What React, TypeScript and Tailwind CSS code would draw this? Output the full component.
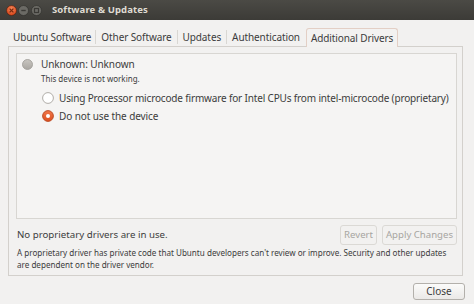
import React from "react";

function TitleButtons() {
  return (
    <div className="flex items-center gap-[1px] pl-[6px]">
      <svg width="11" height="11" viewBox="0 0 11 11">
        <defs>
          <radialGradient id="cl" cx="50%" cy="35%" r="60%">
            <stop offset="0%" stopColor="#f58a5c" />
            <stop offset="100%" stopColor="#d9481c" />
          </radialGradient>
        </defs>
        <circle cx="5.5" cy="5.5" r="5" fill="url(#cl)" stroke="#4a2010" strokeWidth="0.6" />
        <path d="M3.6 3.6 L7.4 7.4 M7.4 3.6 L3.6 7.4" stroke="#7a2a10" strokeWidth="1.3" />
      </svg>
      <svg width="11" height="11" viewBox="0 0 11 11">
        <circle cx="5.5" cy="5.5" r="5" fill="#6b6a65" stroke="#2e2d2a" strokeWidth="0.6" />
        <path d="M3.3 5.5 L7.7 5.5" stroke="#3a3935" strokeWidth="1.4" />
      </svg>
      <svg width="11" height="11" viewBox="0 0 11 11" className="ml-[1px]">
        <circle cx="5.5" cy="5.5" r="5" fill="#6b6a65" stroke="#2e2d2a" strokeWidth="0.6" />
        <rect x="3.5" y="3.5" width="4" height="4" fill="none" stroke="#3a3935" strokeWidth="1.2" />
      </svg>
    </div>
  );
}

function Radio({ kind }: { kind: "gray" | "white" | "orange" }) {
  if (kind === "gray") {
    return (
      <svg width="11" height="11" viewBox="0 0 11 11">
        <defs>
          <linearGradient id="gr" x1="0" y1="0" x2="0" y2="1">
            <stop offset="0%" stopColor="#c9c6c1" />
            <stop offset="100%" stopColor="#a9a6a1" />
          </linearGradient>
        </defs>
        <circle cx="5.5" cy="5.5" r="5" fill="url(#gr)" stroke="#9c9994" strokeWidth="0.8" />
      </svg>
    );
  }
  if (kind === "white") {
    return (
      <svg width="12" height="12" viewBox="0 0 12 12">
        <circle cx="6" cy="6" r="5.4" fill="#ffffff" stroke="#a8a59f" strokeWidth="0.9" />
      </svg>
    );
  }
  return (
    <svg width="12" height="12" viewBox="0 0 12 12">
      <defs>
        <linearGradient id="or" x1="0" y1="0" x2="0" y2="1">
          <stop offset="0%" stopColor="#f0774a" />
          <stop offset="100%" stopColor="#dd4f1f" />
        </linearGradient>
      </defs>
      <circle cx="6" cy="6" r="5.4" fill="url(#or)" stroke="#b8461f" strokeWidth="0.9" />
      <circle cx="6" cy="6" r="2" fill="#ffffff" />
    </svg>
  );
}

export default function App() {
  const font = { fontFamily: '"Noto Sans", "Open Sans", sans-serif' };
  return (
    <div
      className="w-[474px] h-[304px] bg-[#f2f1f0] flex flex-col overflow-hidden text-[#3c3c3c] whitespace-nowrap"
      style={font}
    >
      {/* title bar */}
      <div className="h-[20px] shrink-0 flex items-center bg-gradient-to-b from-[#4b4a45] to-[#3c3b37]">
        <TitleButtons />
        <span className="ml-[10px] text-[9.5px] font-bold text-[#dfdbd2] tracking-[0.1px]">
          Software &amp; Updates
        </span>
      </div>

      {/* tabs */}
      <div className="flex items-end pl-[13px] pt-[8px] h-[26px] shrink-0 relative z-10">
        <div className="flex items-center h-[18px] text-[10px] tracking-[-0.1px]">
          <span className="pr-[4px]">Ubuntu Software</span>
          <span className="w-px h-[14px] bg-[#d9d7d3]" />
          <span className="px-[5px]">Other Software</span>
          <span className="w-px h-[14px] bg-[#d9d7d3]" />
          <span className="px-[5px]">Updates</span>
          <span className="w-px h-[14px] bg-[#d9d7d3]" />
          <span className="px-[5px]">Authentication</span>
        </div>
        <div className="h-[19px] ml-[1px] px-[4px] flex items-center text-[10px] tracking-[-0.1px] bg-[#f3f2f1] border border-b-0 border-[#e3cfc5] rounded-t-[3px] -mb-px">
          Additional Drivers
        </div>
      </div>

      {/* notebook */}
      <div className="ml-[8px] w-[455px] h-[230px] shrink-0 border border-[#d3d0cc] bg-[#f2f1f0] flex flex-col pl-[7px] pr-[5px] pt-[6px]">
        <div className="h-[166px] shrink-0 border border-[#d8d6d2] bg-[#f5f4f3] flex flex-col pl-[5px] pt-[3px]">
          <div className="flex items-center h-[14px]">
            <Radio kind="gray" />
            <span className="ml-[8px] text-[10px] tracking-[-0.1px]">Unknown: Unknown</span>
          </div>
          <div className="pl-[19px] mt-[1px] text-[8px] h-[14px] leading-[14px]">
            This device is not working.
          </div>
          <div className="flex items-center h-[14px] mt-[5px] pl-[20px]">
            <Radio kind="white" />
            <span className="ml-[5px] text-[10px] tracking-[-0.16px]">
              Using Processor microcode firmware for Intel CPUs from intel-microcode (proprietary)
            </span>
          </div>
          <div className="flex items-center h-[14px] mt-[4px] pl-[20px]">
            <Radio kind="orange" />
            <span className="ml-[5px] text-[10px] tracking-[-0.1px]">Do not use the device</span>
          </div>
        </div>

        <div className="flex items-center h-[20px] mt-[6px] shrink-0">
          <span className="flex-1 text-[9.7px] pl-[1px]">No proprietary drivers are in use.</span>
          <div className="h-[20px] px-[3px] flex items-center border border-[#dbd9d5] rounded-[3px] text-[9.6px] text-[#a7a5a1] bg-[#f2f1f0]">
            Revert
          </div>
          <div className="h-[20px] ml-[5px] px-[3px] flex items-center border border-[#dbd9d5] rounded-[3px] text-[9.6px] text-[#a7a5a1] bg-[#f2f1f0]">
            Apply Changes
          </div>
        </div>

        <div className="mt-[2px] pl-[1px] text-[8.1px] leading-[12px]">
          A proprietary driver has private code that Ubuntu developers can't review or improve. Security and other updates
          <br />
          are dependent on the driver vendor.
        </div>
      </div>

      {/* bottom */}
      <div className="flex justify-end pr-[9px] pt-[7px]">
        <div className="w-[52px] h-[17px] flex items-center justify-center border border-[#b3b0ab] rounded-[3px] bg-gradient-to-b from-[#fbfbfa] to-[#ebe9e7] text-[10px] text-[#3c3c3c]">
          Close
        </div>
      </div>
    </div>
  );
}
